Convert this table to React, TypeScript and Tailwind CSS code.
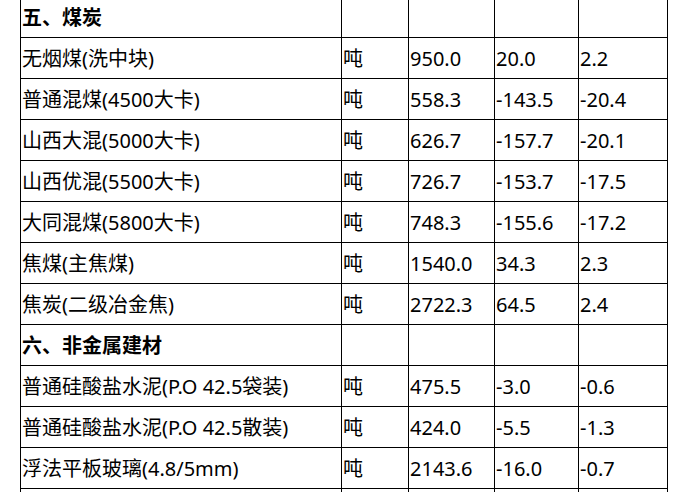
import React from 'react';

type Row = { name: string; unit?: string; price?: string; change?: string; pct?: string; heading?: boolean };

const rows: Row[] = [
    { name: '五、煤炭', heading: true },
    { name: '无烟煤(洗中块)', unit: '吨', price: '950.0', change: '20.0', pct: '2.2' },
    { name: '普通混煤(4500大卡)', unit: '吨', price: '558.3', change: '-143.5', pct: '-20.4' },
    { name: '山西大混(5000大卡)', unit: '吨', price: '626.7', change: '-157.7', pct: '-20.1' },
    { name: '山西优混(5500大卡)', unit: '吨', price: '726.7', change: '-153.7', pct: '-17.5' },
    { name: '大同混煤(5800大卡)', unit: '吨', price: '748.3', change: '-155.6', pct: '-17.2' },
    { name: '焦煤(主焦煤)', unit: '吨', price: '1540.0', change: '34.3', pct: '2.3' },
    { name: '焦炭(二级冶金焦)', unit: '吨', price: '2722.3', change: '64.5', pct: '2.4' },
    { name: '六、非金属建材', heading: true },
    { name: '普通硅酸盐水泥(P.O 42.5袋装)', unit: '吨', price: '475.5', change: '-3.0', pct: '-0.6' },
    { name: '普通硅酸盐水泥(P.O 42.5散装)', unit: '吨', price: '424.0', change: '-5.5', pct: '-1.3' },
    { name: '浮法平板玻璃(4.8/5mm)', unit: '吨', price: '2143.6', change: '-16.0', pct: '-0.7' },
    { name: '', unit: '', price: '', change: '', pct: '' },
];

function Cell({ children, bold }: { children?: React.ReactNode; bold?: boolean }) {
    return (
        <div className={`h-[41px] border-r border-b border-black flex items-center pt-[2px] pl-px whitespace-nowrap overflow-hidden ${bold ? 'font-bold' : ''}`}>
            {children}
        </div>
    );
}

export default function App() {
    return (
        <div className="w-[679px] h-[492px] bg-white overflow-hidden">
            <div
                className="ml-[20px] -mt-[3px] w-[648px] border-l border-black grid grid-cols-[321px_67px_86px_84px_89px] text-[20px] leading-none text-black"
                style={{ fontFamily: '"Noto Sans", "Noto Sans CJK SC", sans-serif' }}
            >
                {rows.map((r, i) => (
                    <React.Fragment key={i}>
                        <Cell bold={r.heading}>{r.name}</Cell>
                        <Cell>{r.unit}</Cell>
                        <Cell>{r.price}</Cell>
                        <Cell>{r.change}</Cell>
                        <Cell>{r.pct}</Cell>
                    </React.Fragment>
                ))}
            </div>
        </div>
    );
}
